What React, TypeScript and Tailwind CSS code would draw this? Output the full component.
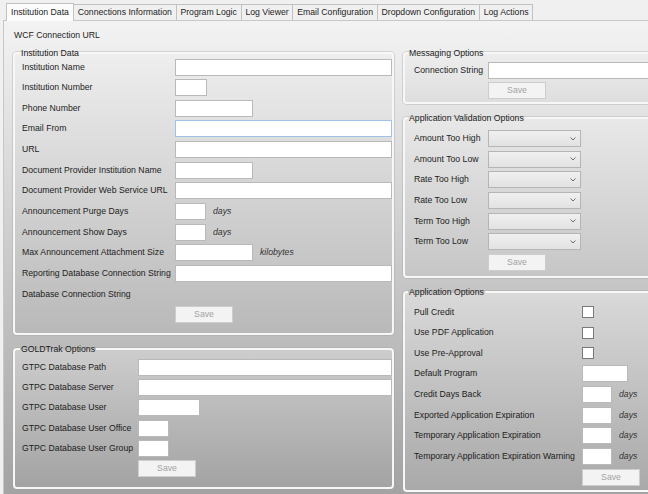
import type { ReactNode } from 'react';

const tabs = [
  'Institution Data',
  'Connections Information',
  'Program Logic',
  'Log Viewer',
  'Email Configuration',
  'Dropdown Configuration',
  'Log Actions',
];

function TextBox({ w, focused }: { w: string; focused?: boolean }) {
  return (
    <div
      className={`${w} h-[17px] bg-white border ${
        focused ? 'border-[#9fc3e6]' : 'border-[#b9b9b9]'
      }`}
    />
  );
}

function Combo() {
  return (
    <div className="w-[93px] h-[17px] bg-gradient-to-b from-[#f0f0f0] to-[#e2e2e2] border border-[#b5b5b5] flex items-center justify-end pr-[4px]">
      <svg width="6" height="4" viewBox="0 0 6 4">
        <path d="M0.5 0.5 L3 3 L5.5 0.5" stroke="#6e6e6e" strokeWidth="1" fill="none" />
      </svg>
    </div>
  );
}

function Check() {
  return <div className="w-[12px] h-[12px] bg-white border border-[#7a7a7a]" />;
}

function SaveButton() {
  return (
    <div className="w-[58px] h-[17px] bg-[#f3f3f3] border border-[#cdcdcd] flex items-center justify-center text-[#a3a3a3]">
      Save
    </div>
  );
}

function Unit({ children }: { children: ReactNode }) {
  return <span className="ml-[7px] italic text-[#333]">{children}</span>;
}

function Row({ label, labelW, children }: { label?: string; labelW: string; children?: ReactNode }) {
  return (
    <div className="flex items-center h-[17px]">
      <div className={`${labelW} shrink-0 whitespace-nowrap`}>{label}</div>
      {children}
    </div>
  );
}

function Group({
  title,
  className,
  legendClass,
  children,
}: {
  title: string;
  className: string;
  legendClass: string;
  children: ReactNode;
}) {
  return (
    <fieldset
      className={`border-2 border-[#f7f7f7] rounded-[4px] shadow-[0_0_0_1px_rgba(160,160,160,0.35)] ${className}`}
    >
      <legend className={`px-[1px] leading-[10px] ${legendClass}`}>{title}</legend>
      {children}
    </fieldset>
  );
}

export default function App() {
  const L = 'w-[153px]';
  const G = 'w-[116px]';
  const R = 'w-[74px]';
  const A = 'w-[168px]';
  const left = 'pl-[7px]';
  const leftLegend = '-ml-[2px]';
  const right = 'pl-[9px]';
  const rightLegend = '-ml-[6px]';

  return (
    <div className="w-[648px] h-[494px] overflow-hidden bg-[#f0f0f0] font-['Liberation_Sans',Arial,sans-serif] text-[8.7px] text-[#1c1c1c] leading-[11px]">
      {/* Tabs */}
      <div className="flex items-end h-[20px] pl-[6px]">
        {tabs.map((t, i) => (
          <div
            key={t}
            className={
              i === 0
                ? 'h-[18px] px-[4px] flex items-center bg-[#fcfcfc] border border-b-0 border-[#c2c2c2] -mb-px relative z-10 whitespace-nowrap'
                : 'h-[16px] px-[3.75px] flex items-center bg-[#f0f0f0] border border-l-0 border-b-0 border-[#c2c2c2] whitespace-nowrap'
            }
          >
            {t}
          </div>
        ))}
      </div>

      {/* Tab page */}
      <div className="h-[474px] ml-[3px] border-t border-l border-[#c8c8c8] bg-gradient-to-b from-[#f3f3f3] to-[#a3a3a3] pt-[9px]">
        <div className="pl-[10px]">WCF Connection URL</div>

        <div className="flex mt-[7px]">
          {/* Left column */}
          <div className="w-[383px] ml-[9px] flex flex-col gap-[9px]">
            <Group
              title="Institution Data"
              legendClass={leftLegend}
              className={`${left} h-[287px] bg-gradient-to-b from-[#eeeeee] to-[#b9b9b9]`}
            >
              <div className="flex flex-col gap-[3.65px] mt-[0.5px]">
                <Row label="Institution Name" labelW={L}><TextBox w="w-[217px]" /></Row>
                <Row label="Institution Number" labelW={L}><TextBox w="w-[32px]" /></Row>
                <Row label="Phone Number" labelW={L}><TextBox w="w-[78px]" /></Row>
                <Row label="Email From" labelW={L}><TextBox w="w-[217px]" focused /></Row>
                <Row label="URL" labelW={L}><TextBox w="w-[217px]" /></Row>
                <Row label="Document Provider Institution Name" labelW={L}><TextBox w="w-[78px]" /></Row>
                <Row label="Document Provider Web Service URL" labelW={L}><TextBox w="w-[217px]" /></Row>
                <Row label="Announcement Purge Days" labelW={L}>
                  <TextBox w="w-[31px]" />
                  <Unit>days</Unit>
                </Row>
                <Row label="Announcement Show Days" labelW={L}>
                  <TextBox w="w-[31px]" />
                  <Unit>days</Unit>
                </Row>
                <Row label="Max Announcement Attachment Size" labelW={L}>
                  <TextBox w="w-[78px]" />
                  <Unit>kilobytes</Unit>
                </Row>
                <Row label="Reporting Database Connection String" labelW={L}><TextBox w="w-[217px]" /></Row>
                <Row label="Database Connection String" labelW={L} />
                <Row labelW={L}><SaveButton /></Row>
              </div>
            </Group>

            <Group
              title="GOLDTrak Options"
              legendClass={leftLegend}
              className={`${left} h-[145px] bg-gradient-to-b from-[#cdcdcd] to-[#a3a3a3]`}
            >
              <div className="flex flex-col gap-[3.4px] mt-[4.5px]">
                <Row label="GTPC Database Path" labelW={G}><TextBox w="w-[254px]" /></Row>
                <Row label="GTPC Database Server" labelW={G}><TextBox w="w-[254px]" /></Row>
                <Row label="GTPC Database User" labelW={G}><TextBox w="w-[62px]" /></Row>
                <Row label="GTPC Database User Office" labelW={G}><TextBox w="w-[31px]" /></Row>
                <Row label="GTPC Database User Group" labelW={G}><TextBox w="w-[31px]" /></Row>
                <Row labelW={G}><SaveButton /></Row>
              </div>
            </Group>
          </div>

          {/* Right column */}
          <div className="w-[262px] ml-[9px] shrink-0 flex flex-col gap-[9px]">
            <Group
              title="Messaging Options"
              legendClass={rightLegend}
              className={`${right} h-[56px] bg-gradient-to-b from-[#ededed] to-[#dedede]`}
            >
              <div className="flex flex-col gap-[3.6px] mt-[3.5px]">
                <Row label="Connection String" labelW={R}><TextBox w="w-[170px]" /></Row>
                <Row labelW={R}><SaveButton /></Row>
              </div>
            </Group>

            <Group
              title="Application Validation Options"
              legendClass={rightLegend}
              className={`${right} h-[165px] bg-gradient-to-b from-[#e8e8e8] to-[#c6c6c6]`}
            >
              <div className="flex flex-col gap-[3.65px] mt-[7px]">
                <Row label="Amount Too High" labelW={R}><Combo /></Row>
                <Row label="Amount Too Low" labelW={R}><Combo /></Row>
                <Row label="Rate Too High" labelW={R}><Combo /></Row>
                <Row label="Rate Too Low" labelW={R}><Combo /></Row>
                <Row label="Term Too High" labelW={R}><Combo /></Row>
                <Row label="Term Too Low" labelW={R}><Combo /></Row>
                <Row labelW={R}><SaveButton /></Row>
              </div>
            </Group>

            <Group
              title="Application Options"
              legendClass={rightLegend}
              className={`${right} h-[205px] bg-gradient-to-b from-[#d9d9d9] to-[#a9a9a9]`}
            >
              <div className="flex flex-col gap-[3.65px] mt-[6.5px]">
                <Row label="Pull Credit" labelW={A}><Check /></Row>
                <Row label="Use PDF Application" labelW={A}><Check /></Row>
                <Row label="Use Pre-Approval" labelW={A}><Check /></Row>
                <Row label="Default Program" labelW={A}><TextBox w="w-[46px]" /></Row>
                <Row label="Credit Days Back" labelW={A}>
                  <TextBox w="w-[30px]" />
                  <Unit>days</Unit>
                </Row>
                <Row label="Exported Application Expiration" labelW={A}>
                  <TextBox w="w-[30px]" />
                  <Unit>days</Unit>
                </Row>
                <Row label="Temporary Application Expiration" labelW={A}>
                  <TextBox w="w-[30px]" />
                  <Unit>days</Unit>
                </Row>
                <Row label="Temporary Application Expiration Warning" labelW={A}>
                  <TextBox w="w-[30px]" />
                  <Unit>days</Unit>
                </Row>
                <Row labelW={A}><SaveButton /></Row>
              </div>
            </Group>
          </div>
        </div>
      </div>
    </div>
  );
}
